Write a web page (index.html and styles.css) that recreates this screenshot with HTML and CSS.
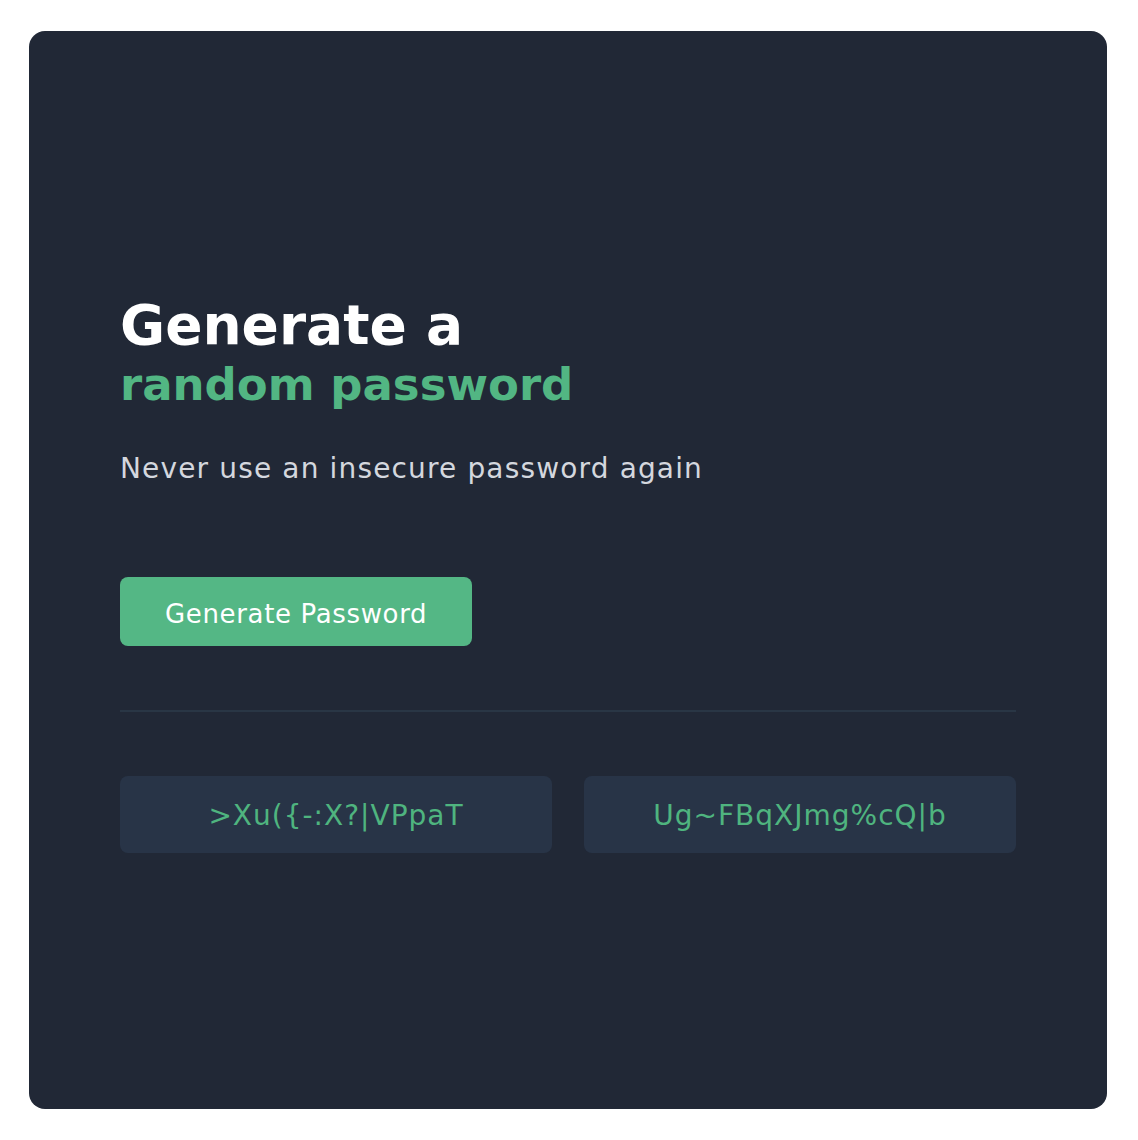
FILE: index.html
```html
<!DOCTYPE html>
<html lang="en">
<head>
<meta charset="utf-8">
<title>Password Generator</title>
<link rel="stylesheet" href="styles.css">
</head>
<body>
<main class="page">
  <section class="card">
    <h1 class="title">Generate a<span class="accent">random password</span></h1>
    <p class="subtitle">Never use an insecure password again</p>
    <button class="btn" type="button">Generate Password</button>
    <hr class="divider">
    <div class="passwords">
      <div class="pw">&gt;Xu({-:X?|VPpaT</div>
      <div class="pw">Ug~FBqXJmg%cQ|b</div>
    </div>
  </section>
</main>
</body>
</html>
```
FILE: styles.css
```css
html, body {
  margin: 0;
  padding: 0;
  background: #ffffff;
}

.page {
  padding: 31px 31px 31px 29px;
}

.card {
  box-sizing: border-box;
  width: 1078px;
  height: 1078px;
  background: #212836;
  border-radius: 16px;
  padding: 264px 91px 0;
  display: flex;
  flex-direction: column;
  font-family: "DejaVu Sans", "Liberation Sans", sans-serif;
}

.title {
  margin: 0;
  font-size: 55px;
  line-height: 60px;
  font-weight: 700;
  color: #ffffff;
}

.accent {
  display: block;
  font-size: 45px;
  line-height: 60px;
  color: #52b683;
}

.subtitle {
  margin: 36px 0 0;
  font-size: 28px;
  line-height: 36px;
  letter-spacing: 1.15px;
  color: #d4d7de;
}

.btn {
  align-self: flex-start;
  box-sizing: border-box;
  margin-top: 90px;
  height: 69px;
  padding: 5px 45px 0;
  border: none;
  border-radius: 8px;
  background: #54b785;
  color: #ffffff;
  font-family: inherit;
  font-size: 26px;
  line-height: 64px;
  letter-spacing: 0.65px;
}

.divider {
  margin: 64px 0 0;
  height: 2px;
  border: none;
  background: #293645;
}

.passwords {
  margin-top: 64px;
  display: grid;
  grid-template-columns: 1fr 1fr;
  gap: 32px;
}

.pw {
  box-sizing: border-box;
  height: 77px;
  padding-top: 2px;
  border-radius: 8px;
  background: #283447;
  color: #4fb47f;
  text-align: center;
  font-size: 28px;
  line-height: 75px;
  letter-spacing: 1px;
}
```
